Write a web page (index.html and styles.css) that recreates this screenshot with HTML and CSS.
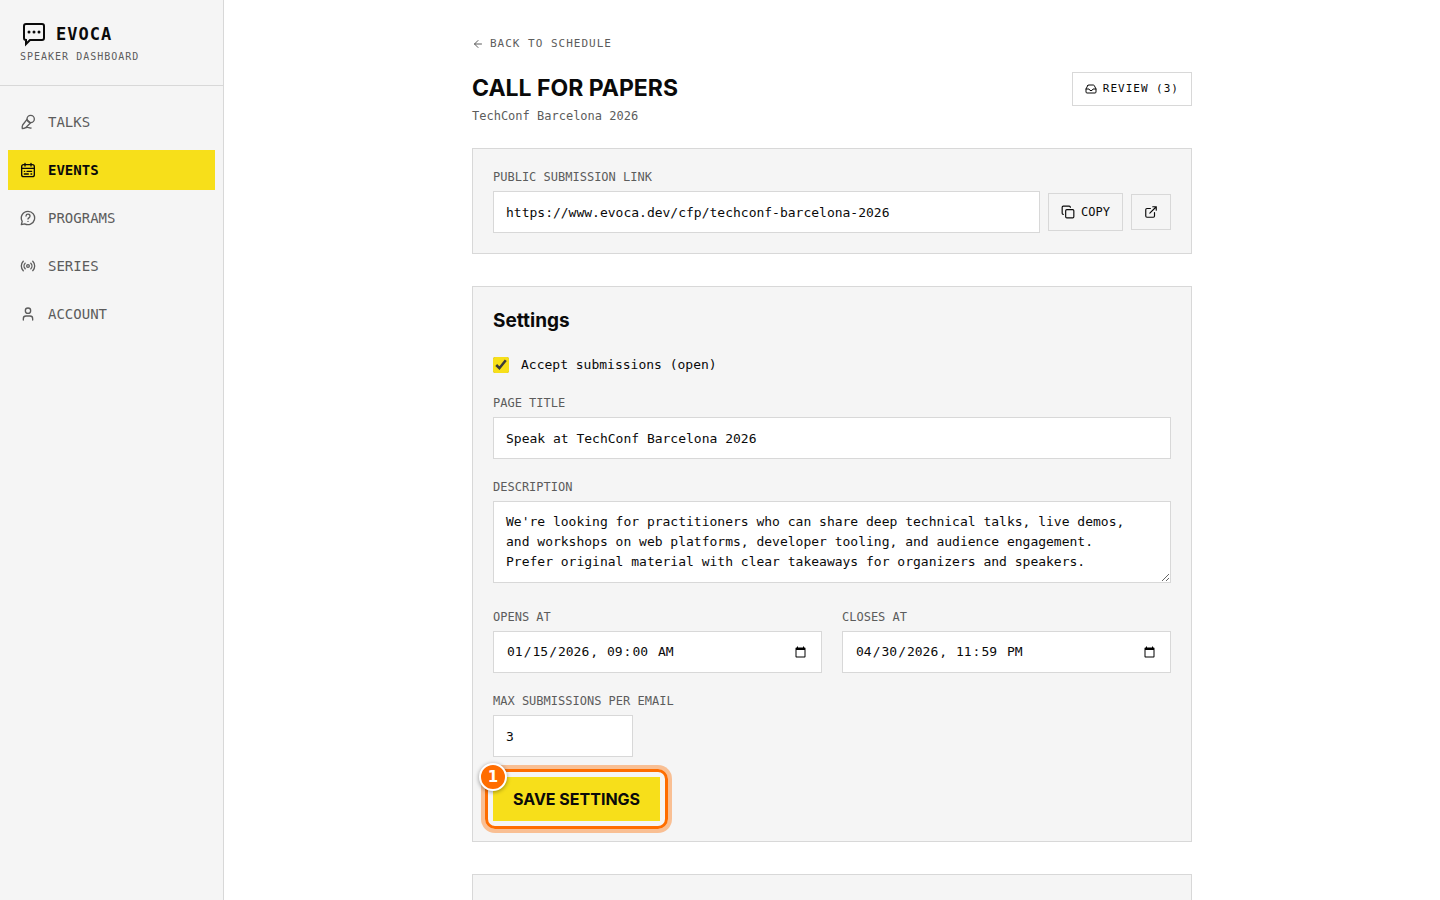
FILE: index.html
```html
<!DOCTYPE html>
<html lang="en">
<head>
    <meta charset="UTF-8">
    <meta name="viewport" content="width=device-width, initial-scale=1.0">
    <title>Call for Papers - Evoca</title>
    <link rel="stylesheet" href="styles.css">
</head>
<body>
    <div class="app">
        <aside class="sidebar">
            <div class="brand">
                <a href="#" class="brand-name">
                    <svg class="brand-icon" viewBox="0 0 28 28" fill="none" stroke="currentColor" stroke-width="2">
                        <path d="M6 4h16a2 2 0 0 1 2 2v12a2 2 0 0 1-2 2H10l-4 4v-4a2 2 0 0 1-2-2V6a2 2 0 0 1 2-2z"/>
                        <g fill="currentColor" stroke="none">
                            <circle cx="9" cy="12" r="1.500"/>
                            <circle cx="14" cy="12" r="1.500"/>
                            <circle cx="19" cy="12" r="1.500"/>
                        </g>
                    </svg>
                    EVOCA
                </a>
                <p class="brand-sub">SPEAKER DASHBOARD</p>
            </div>
            <nav class="nav">
                <a href="#" class="nav-link">
                    <svg class="icon" viewBox="0 0 24 24">
                        <circle cx="16" cy="7.500" r="5.500"/>
                        <path d="M10.500 8 4 16.500c-.8 1.500-1 3.500-.5 5.500 1.500 0 3.500-.5 5-1.500l7.500-7.500M10.500 8.500l5 4.500M3.500 22c3.500-.5 5-2 7.500-2s2.500 1.500 5.500 1"/>
                    </svg>
                    TALKS
                </a>
                <a href="#" class="nav-link active">
                    <svg class="icon" viewBox="0 0 24 24">
                        <rect x="2.500" y="4" width="19" height="18" rx="3"/>
                        <path d="M7.500 2v4M16.500 2v4M3 9.500h18M6.500 14h.5M10.500 14h7M6.500 18h6M16.500 18h1"/>
                    </svg>
                    EVENTS
                </a>
                <a href="#" class="nav-link">
                    <svg class="icon" viewBox="0 0 24 24">
                        <path d="M12 2a10 10 0 1 1-5 18.700L2 22l1.300-5A10 10 0 0 1 12 2z"/>
                        <path d="M9 9a3 3 0 0 1 6 .5c0 2-3 2.500-3 4M12 17v.1"/>
                    </svg>
                    PROGRAMS
                </a>
                <a href="#" class="nav-link">
                    <svg class="icon" viewBox="0 0 24 24">
                        <circle cx="12" cy="12" r="2"/>
                        <path d="M4.900 19.100C1 15.200 1 8.800 4.900 4.900M7.800 16.200c-2.300-2.300-2.300-6.100 0-8.500M16.200 7.800c2.300 2.300 2.300 6.100 0 8.500M19.100 4.900C23 8.800 23 15.100 19.100 19"/>
                    </svg>
                    SERIES
                </a>
                <a href="#" class="nav-link">
                    <svg class="icon" viewBox="0 0 24 24">
                        <path d="M19 21v-2a4 4 0 0 0-4-4H9a4 4 0 0 0-4 4v2"/>
                        <circle cx="12" cy="7" r="4"/>
                    </svg>
                    ACCOUNT
                </a>
            </nav>
        </aside>

        <main class="main">
            <div class="content">
                <a href="#" class="back-link">
                    <svg class="icon icon-sm" viewBox="0 0 24 24"><path d="m12 19-7-7 7-7M19 12H5"/></svg>
                    BACK TO SCHEDULE
                </a>

                <header class="page-header">
                    <div>
                        <h1>CALL FOR PAPERS</h1>
                        <p class="event-name">TechConf Barcelona 2026</p>
                    </div>
                    <a href="#" class="review-link">
                        <svg class="icon icon-sm" viewBox="0 0 24 24">
                            <path d="M22 12h-6l-2 3h-4l-2-3H2"/>
                            <path d="M5.450 5.110 2 12v6a2 2 0 0 0 2 2h16a2 2 0 0 0 2-2v-6l-3.450-6.890A2 2 0 0 0 16.760 4H7.240a2 2 0 0 0-1.790 1.110z"/>
                        </svg>
                        REVIEW (3)
                    </a>
                </header>

                <section class="card">
                    <label class="label" for="public-link">PUBLIC SUBMISSION LINK</label>
                    <div class="link-row">
                        <input class="input" type="text" id="public-link" value="https://www.evoca.dev/cfp/techconf-barcelona-2026" readonly>
                        <button type="button" class="small-button">
                            <svg class="icon icon-md" viewBox="0 0 24 24">
                                <rect x="8" y="8" width="14" height="14" rx="2"/>
                                <path d="M4 16c-1.100 0-2-.9-2-2V4c0-1.100.9-2 2-2h10c1.100 0 2 .9 2 2"/>
                            </svg>
                            COPY
                        </button>
                        <a href="#" class="small-button" aria-label="Open page">
                            <svg class="icon icon-md" viewBox="0 0 24 24">
                                <path d="M15 3h6v6M10 14 21 3M18 13v6a2 2 0 0 1-2 2H5a2 2 0 0 1-2-2V8a2 2 0 0 1 2-2h6"/>
                            </svg>
                        </a>
                    </div>
                </section>

                <section class="card">
                    <form class="settings">
                        <h2>Settings</h2>
                        <label class="check-row" for="accept">
                            <input type="checkbox" id="accept" checked>
                            Accept submissions (open)
                        </label>
                        <div>
                            <label class="label" for="page-title">PAGE TITLE</label>
                            <input class="input" type="text" id="page-title" value="Speak at TechConf Barcelona 2026">
                        </div>
                        <div class="description">
                            <label class="label" for="description">DESCRIPTION</label>
                            <textarea class="input" id="description" rows="3">We're looking for practitioners who can share deep technical talks, live demos, and workshops on web platforms, developer tooling, and audience engagement. Prefer original material with clear takeaways for organizers and speakers.</textarea>
                        </div>
                        <div class="dates">
                            <div>
                                <label class="label" for="opens">OPENS AT</label>
                                <input class="input" type="datetime-local" id="opens" value="2026-01-15T09:00">
                            </div>
                            <div>
                                <label class="label" for="closes">CLOSES AT</label>
                                <input class="input" type="datetime-local" id="closes" value="2026-04-30T23:59">
                            </div>
                        </div>
                        <div>
                            <label class="label" for="max">MAX SUBMISSIONS PER EMAIL</label>
                            <input class="input input-short" type="number" id="max" value="3">
                        </div>
                        <div class="save-wrap">
                            <button type="submit" class="save-button">SAVE SETTINGS</button>
                            <span class="step-badge">1</span>
                        </div>
                    </form>
                </section>

                <section class="card card-next"></section>
            </div>
        </main>
    </div>
</body>
</html>
```
FILE: styles.css
```css
* {
    box-sizing: border-box;
}

body {
    margin: 0;
    font-family: "DejaVu Sans Mono", monospace;
    font-size: 13px;
    line-height: 20px;
    color: #0a0a0a;
    background-color: #fff;
}

h1, h2, p {
    margin: 0;
}

a {
    color: inherit;
    text-decoration: none;
}

.app {
    display: flex;
    height: 100vh;
}

.sidebar {
    width: 224px;
    flex-shrink: 0;
    background-color: #f5f5f5;
    border-right: 1px solid #d8d8d8;
}

.brand {
    padding: 20px;
    border-bottom: 1px solid #d8d8d8;
}

.brand-name {
    display: flex;
    align-items: center;
    gap: 8px;
    font-size: 17px;
    font-weight: bold;
    line-height: 28px;
    letter-spacing: 1px;
}

.brand-icon {
    width: 28px;
    height: 28px;
}

.brand-sub {
    font-size: 10px;
    line-height: 17px;
    letter-spacing: 1px;
    color: #5c5c5c;
}

.nav {
    display: flex;
    flex-direction: column;
    gap: 8px;
    padding: 16px 8px;
}

.nav-link {
    display: flex;
    align-items: center;
    gap: 12px;
    padding: 10px 12px;
    font-size: 14px;
    color: #5c5c5c;
}

.nav-link.active {
    background-color: #f7df1a;
    color: #0a0a0a;
    font-weight: bold;
}

.icon {
    width: 16px;
    height: 16px;
    flex-shrink: 0;
    fill: none;
    stroke: currentColor;
    stroke-width: 2;
    stroke-linecap: round;
    stroke-linejoin: round;
}

.icon-md {
    width: 14px;
    height: 14px;
}

.icon-sm {
    width: 12px;
    height: 12px;
}

.main {
    flex: 1;
    overflow-y: auto;
    scrollbar-width: none;
}

.content {
    max-width: 784px;
    margin: 0 auto;
    padding: 32px;
}

.back-link {
    display: flex;
    align-items: center;
    gap: 6px;
    margin-bottom: 16px;
    font-size: 11px;
    line-height: 24px;
    letter-spacing: 1px;
    color: #5c5c5c;
}

.page-header {
    display: flex;
    justify-content: space-between;
    align-items: flex-start;
    margin-bottom: 24px;
}

h1, h2, .save-button {
    font-family: Inter, sans-serif;
    font-weight: bold;
}

h1 {
    font-size: 23px;
    line-height: 32px;
}

h2 {
    font-size: 19px;
    line-height: 28px;
}

.event-name {
    margin-top: 4px;
    font-size: 12px;
    line-height: 16px;
    color: #5c5c5c;
}

.review-link {
    display: flex;
    align-items: center;
    gap: 6px;
    padding: 8px 12px;
    border: 1px solid #d8d8d8;
    font-size: 11px;
    line-height: 16px;
    letter-spacing: 1px;
}

.card {
    margin-bottom: 32px;
    padding: 20px;
    background-color: #f5f5f5;
    border: 1px solid #d8d8d8;
}

.card-next {
    min-height: 200px;
}

.label {
    display: block;
    margin-bottom: 6px;
    font-size: 12px;
    line-height: 16px;
    color: #5c5c5c;
}

.input {
    display: block;
    width: 100%;
    height: 42px;
    padding: 10px 12px;
    border: 1px solid #d8d8d8;
    border-radius: 0;
    background-color: #fff;
    color: #0a0a0a;
    font-family: inherit;
    font-size: 13px;
    line-height: 20px;
}

textarea.input {
    height: auto;
    padding-right: 32px;
    resize: vertical;
}

.input-short {
    width: 140px;
}

.link-row {
    display: flex;
    align-items: center;
    gap: 8px;
}

.link-row .input {
    flex: 1;
}

.small-button {
    display: flex;
    align-items: center;
    gap: 6px;
    padding: 10px 12px;
    border: 1px solid #d8d8d8;
    background-color: transparent;
    color: #0a0a0a;
    font-family: inherit;
    font-size: 12px;
    line-height: 16px;
}

.settings {
    display: flex;
    flex-direction: column;
    gap: 20px;
}

.check-row {
    display: flex;
    align-items: center;
    gap: 12px;
}

.check-row input {
    width: 16px;
    height: 16px;
    margin: 0;
    accent-color: #f7df1a;
}

.description {
    padding-bottom: 6px;
}

.dates {
    display: grid;
    grid-template-columns: 1fr 1fr;
    gap: 20px;
}

.save-wrap {
    position: relative;
    align-self: flex-start;
}

.save-button {
    display: block;
    padding: 10px 20px;
    border: none;
    background-color: #f7df1a;
    color: #0a0a0a;
    font-size: 16px;
    line-height: 24px;
}

/* Highlight ring around the save button */
.save-wrap::after {
    content: "";
    position: absolute;
    inset: -8px;
    border: 3px solid #ff6d00;
    border-radius: 10px;
    box-shadow: 0 0 0 4px rgba(255, 109, 0, 0.4);
    pointer-events: none;
}

.step-badge {
    position: absolute;
    top: -14px;
    left: -14px;
    z-index: 1;
    width: 28px;
    height: 28px;
    border: 2px solid #fff;
    border-radius: 50%;
    background-color: #ff6d00;
    box-shadow: 0 1px 4px rgba(0, 0, 0, 0.4);
    color: #fff;
    font-family: "DejaVu Sans", sans-serif;
    font-size: 15px;
    font-weight: bold;
    line-height: 24px;
    text-align: center;
}
```
